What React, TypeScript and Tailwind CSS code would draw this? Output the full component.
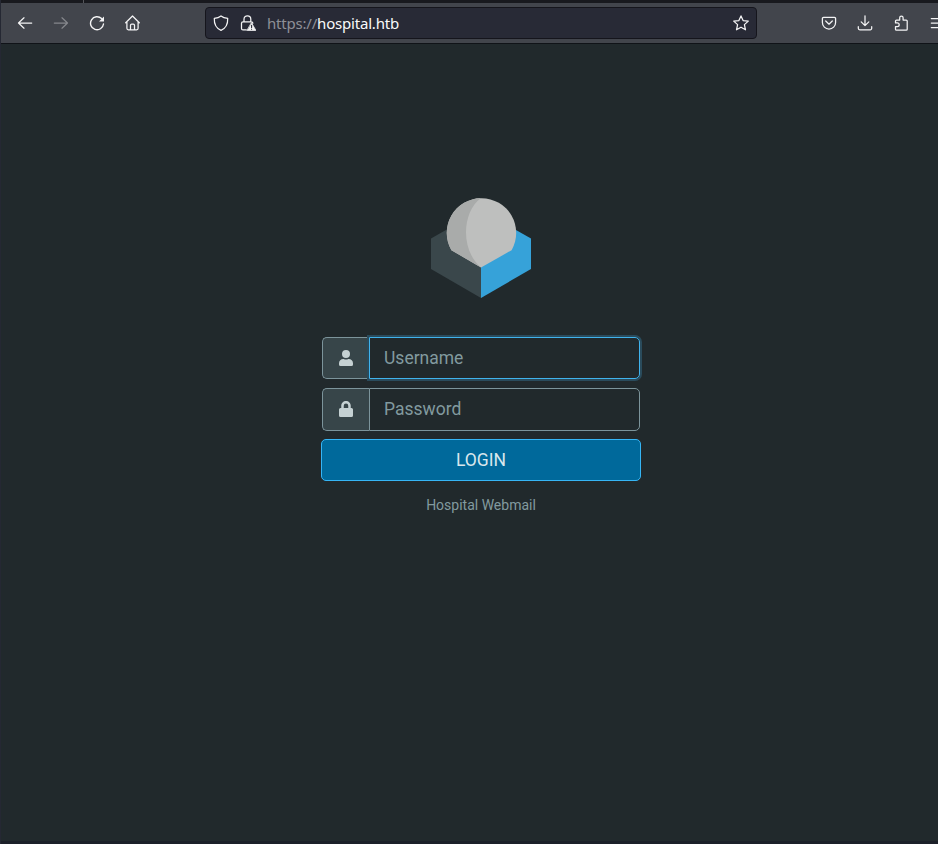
import type { ReactNode, SVGProps } from 'react';

function Glyph({ children, ...rest }: { children: ReactNode } & SVGProps<SVGSVGElement>) {
  return (
    <svg
      width="16"
      height="16"
      viewBox="0 0 16 16"
      fill="none"
      stroke="currentColor"
      strokeWidth="1.25"
      strokeLinecap="round"
      strokeLinejoin="round"
      {...rest}
    >
      {children}
    </svg>
  );
}

function Toolbar() {
  return (
    <header className="flex h-10 shrink-0 items-center overflow-hidden bg-[#42454c] pl-4 text-[#f4f4f5]">
      <nav className="flex items-center gap-5">
        <Glyph><path d="M14.700 8H1.500M7 2.800 1.500 8 7 13.200" /></Glyph>
        <Glyph className="text-[#85878c]"><path d="M1.300 8h13.200M9 2.800 14.500 8 9 13.200" /></Glyph>
        <Glyph strokeWidth="1.4">
          <path d="M14.500 9A6.500 6.500 0 1 1 12.600 3.600" />
          <path d="M15 1.500v5h-5z" fill="currentColor" stroke="none" />
        </Glyph>
        <Glyph>
          <path d="M.7 7.800 7.500 1l6.800 6.800M1.900 6.800v6.500a1.500 1.500 0 0 0 1.500 1.500h8.200a1.500 1.500 0 0 0 1.500-1.500V6.800M5.500 14.600v-4.400A1.200 1.200 0 0 1 6.700 9h1.600a1.200 1.200 0 0 1 1.200 1.200v4.400" />
        </Glyph>
      </nav>
      <div className="ml-16 flex h-8 w-[552px] shrink-0 items-center rounded border border-[#15151c] bg-[#282a36] px-[7px]">
        <Glyph><path d="M8 .9c2 1.500 4 2.100 6.700 2.500.2 4.800-1.200 9.700-6.700 11.900C2.500 13.100 1.100 8.200 1.300 3.400 4 3 6 2.400 8 .9Z" /></Glyph>
        <Glyph className="ml-[11px]">
          <path d="M4 6.800V4.200a3.400 3.400 0 0 1 6.800 0v2.600M6.300 14.900H3a1.500 1.500 0 0 1-1.500-1.500V8.300A1.500 1.500 0 0 1 3 6.800h8.300a1.500 1.500 0 0 1 1.500 1.500" />
          <path d="M11.600 8 15.900 15.400H7.300z" fill="currentColor" stroke="currentColor" strokeWidth=".8" />
          <path d="M11.600 10.400v2.200M11.600 14.200v.1" stroke="#282a36" strokeWidth="1.1" />
        </Glyph>
        <span className="ml-[11px] flex-1 font-['Noto_Sans',sans-serif] text-[15px] leading-5 tracking-[-0.2px] text-[#fafafa]">
          <span className="text-[#8e8f96]">https://</span>hospital.htb
        </span>
        <Glyph><path d="m8 .9 2.100 4.700 5.200.5-3.900 3.500 1.100 5.200L8 12.200l-4.500 2.600 1.100-5.200L.7 6.100l5.200-.5z" /></Glyph>
      </div>
      <div className="ml-16 flex shrink-0 items-center gap-5">
        <Glyph>
          <path d="M2.500 2.400h11a1.100 1.100 0 0 1 1.100 1.100v4a6.600 6.600 0 0 1-13.200 0v-4a1.100 1.100 0 0 1 1.100-1.100ZM4.700 6 8 9.200 11.300 6" />
        </Glyph>
        <Glyph><path d="M8 .8v9.700M4.200 6.900 8 10.600l3.800-3.700M1.300 11.700v1.600a1.500 1.500 0 0 0 1.500 1.500h10.400a1.500 1.500 0 0 0 1.500-1.500v-1.600" /></Glyph>
        <Glyph>
          <path d="M2.500 7.900V6a1 1 0 0 1 1-1h3.200V2.800a1.700 1.700 0 0 1 3.400 0V5h3.100a1 1 0 0 1 1 1v8.200a1 1 0 0 1-1 1H3.500a1 1 0 0 1-1-1v-2.500h1.800a1.900 1.900 0 0 0 0-3.800z" />
        </Glyph>
        <Glyph><path d="M2.300 3.500h13M2.300 8h13M2.300 12.500h13" /></Glyph>
      </div>
    </header>
  );
}

function Logo() {
  return (
    <svg width="100" height="100" viewBox="0 0 100 100">
      <path d="M0 40.500 50 12v88L0 71z" fill="#3a474b" />
      <path d="M50 12 100 40.500V71L50 100z" fill="#36a2d9" />
      <path d="M20.400 52.200A34.700 34.700 0 1 1 80.600 52.200L50 69.500z" fill="#bebfbe" />
      <path d="M20.400 52.200A34.700 34.700 0 0 1 50 .1C30 15 30 53 50 69.500z" fill="#a9abaa" />
    </svg>
  );
}

function UserIcon() {
  return (
    <svg width="14" height="16" viewBox="0 0 448 512" fill="currentColor">
      <path d="M224 256a128 128 0 1 0 0-256 128 128 0 0 0 0 256zm90 32h-17a174 174 0 0 1-146 0h-17A134 134 0 0 0 0 422v42a48 48 0 0 0 48 48h352a48 48 0 0 0 48-48v-42a134 134 0 0 0-134-134z" />
    </svg>
  );
}

function LockIcon() {
  return (
    <svg width="14" height="16" viewBox="0 0 448 512" fill="currentColor">
      <path d="M400 224h-24v-72C376 68 308 0 224 0S72 68 72 152v72H48a48 48 0 0 0-48 48v192a48 48 0 0 0 48 48h352a48 48 0 0 0 48-48V272a48 48 0 0 0-48-48zm-104 0H152v-72a72 72 0 0 1 144 0z" />
    </svg>
  );
}

export default function App() {
  return (
    <div className="flex h-[844px] w-[938px] flex-col overflow-hidden border-l border-[#252833] bg-[#21292c] font-[Roboto,sans-serif]">
      <div className="flex h-[3px] shrink-0 bg-[#18191e]">
        <div className="ml-[82px] h-full w-px bg-[#55565b]" />
      </div>
      <Toolbar />
      <div className="h-px shrink-0 bg-[#101318]" />
      <main className="flex flex-1 flex-col items-center pt-[154px] pl-[23px]">
        <Logo />
        <form className="mt-[39px] flex w-80 flex-col">
          <div className="mx-px flex h-[42px]">
            <span className="flex w-[47px] items-center justify-center rounded-l-[5px] border border-r-0 border-[#7c949b] bg-[#374549] text-[#c5d1d3]">
              <UserIcon />
            </span>
            <input
              aria-label="Username"
              placeholder="Username"
              className="w-[271px] rounded-r-[5px] border border-[#40b3ed] bg-transparent px-[14px] text-[17.5px] text-[#c5d1d3] ring-2 ring-[#2a4b5c] outline-none placeholder:text-[#829a9f]"
            />
          </div>
          <div className="mx-px mt-[9px] flex h-[43px]">
            <span className="flex w-[47px] items-center justify-center rounded-l-[5px] border border-r-0 border-[#7c949b] bg-[#374549] pb-px text-[#c5d1d3]">
              <LockIcon />
            </span>
            <input
              type="password"
              aria-label="Password"
              placeholder="Password"
              className="w-[271px] rounded-r-[5px] border border-[#7c949b] bg-transparent px-[14px] text-[17.5px] text-[#c5d1d3] outline-none placeholder:text-[#829a9f]"
            />
          </div>
          <button type="button" className="mt-2 h-[42px] rounded-[5px] border border-[#36b5f5] bg-[#00699b] text-[17.5px] text-[#d9e7ed]">
            LOGIN
          </button>
        </form>
        <p className="mt-[14px] text-sm leading-5 text-[#829a9f]">Hospital Webmail</p>
      </main>
      <div className="h-[3px] shrink-0 bg-[#1c2029]" />
    </div>
  );
}
